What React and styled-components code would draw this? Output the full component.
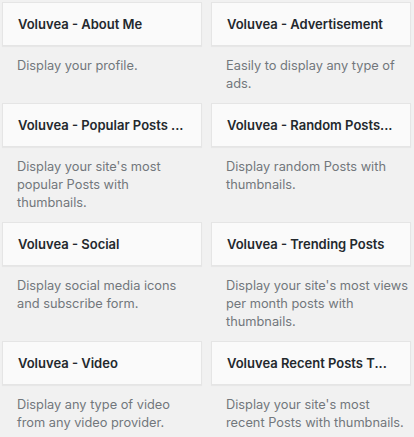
import styled, { createGlobalStyle } from "styled-components";

const widgets = [
  { title: "Voluvea - About Me", lines: ["Display your profile."] },
  { title: "Voluvea - Advertisement", lines: ["Easily to display any type of", "ads."] },
  {
    title: "Voluvea - Popular Posts ...",
    lines: ["Display your site's most", "popular Posts with", "thumbnails."],
  },
  { title: "Voluvea - Random Posts...", lines: ["Display random Posts with", "thumbnails."] },
  { title: "Voluvea - Social", lines: ["Display social media icons", "and subscribe form."] },
  {
    title: "Voluvea - Trending Posts",
    lines: ["Display your site's most views", "per month posts with", "thumbnails."],
  },
  { title: "Voluvea - Video", lines: ["Display any type of video", "from any video provider."] },
  {
    title: "Voluvea Recent Posts T...",
    lines: ["Display your site's most", "recent Posts with thumbnails."],
  },
];

function App() {
  return (
    <>
      <GlobalStyle />
      <WidgetList>
        {widgets.map((w) => (
          <Widget key={w.title}>
            <WidgetTop>
              <WidgetTitle>{w.title}</WidgetTitle>
            </WidgetTop>
            <Description>
              {w.lines.map((l) => (
                <Line key={l}>{l}</Line>
              ))}
            </Description>
          </Widget>
        ))}
      </WidgetList>
    </>
  );
}

export default App;

const GlobalStyle = createGlobalStyle`
  html, body {
    margin: 0;
    padding: 0;
    background: #f1f1f1;
  }
  body {
    font-family: Inter, "Noto Sans", sans-serif;
  }
`;

const WidgetList = styled.div`
  display: grid;
  grid-template-columns: 200px 200px;
  column-gap: 9px;
  padding: 2px 0 0 2px;
`;

const Widget = styled.div`
  display: flex;
  flex-direction: column;
`;

const WidgetTop = styled.div`
  height: 42px;
  display: flex;
  align-items: center;
  padding: 0 15px;
  background: #fafafa;
  border: 1px solid #e5e5e5;
  box-shadow: 0 1px 1px rgba(0, 0, 0, 0.04);
`;

const WidgetTitle = styled.h3`
  margin: 0;
  font-size: 13px;
  font-weight: 600;
  color: #23282d;
  white-space: nowrap;
`;

const Description = styled.div`
  padding: 11px 15px 10px;
  font-size: 12.8px;
  line-height: 18px;
  color: #72777c;
`;

const Line = styled.div`
  white-space: nowrap;
`;
